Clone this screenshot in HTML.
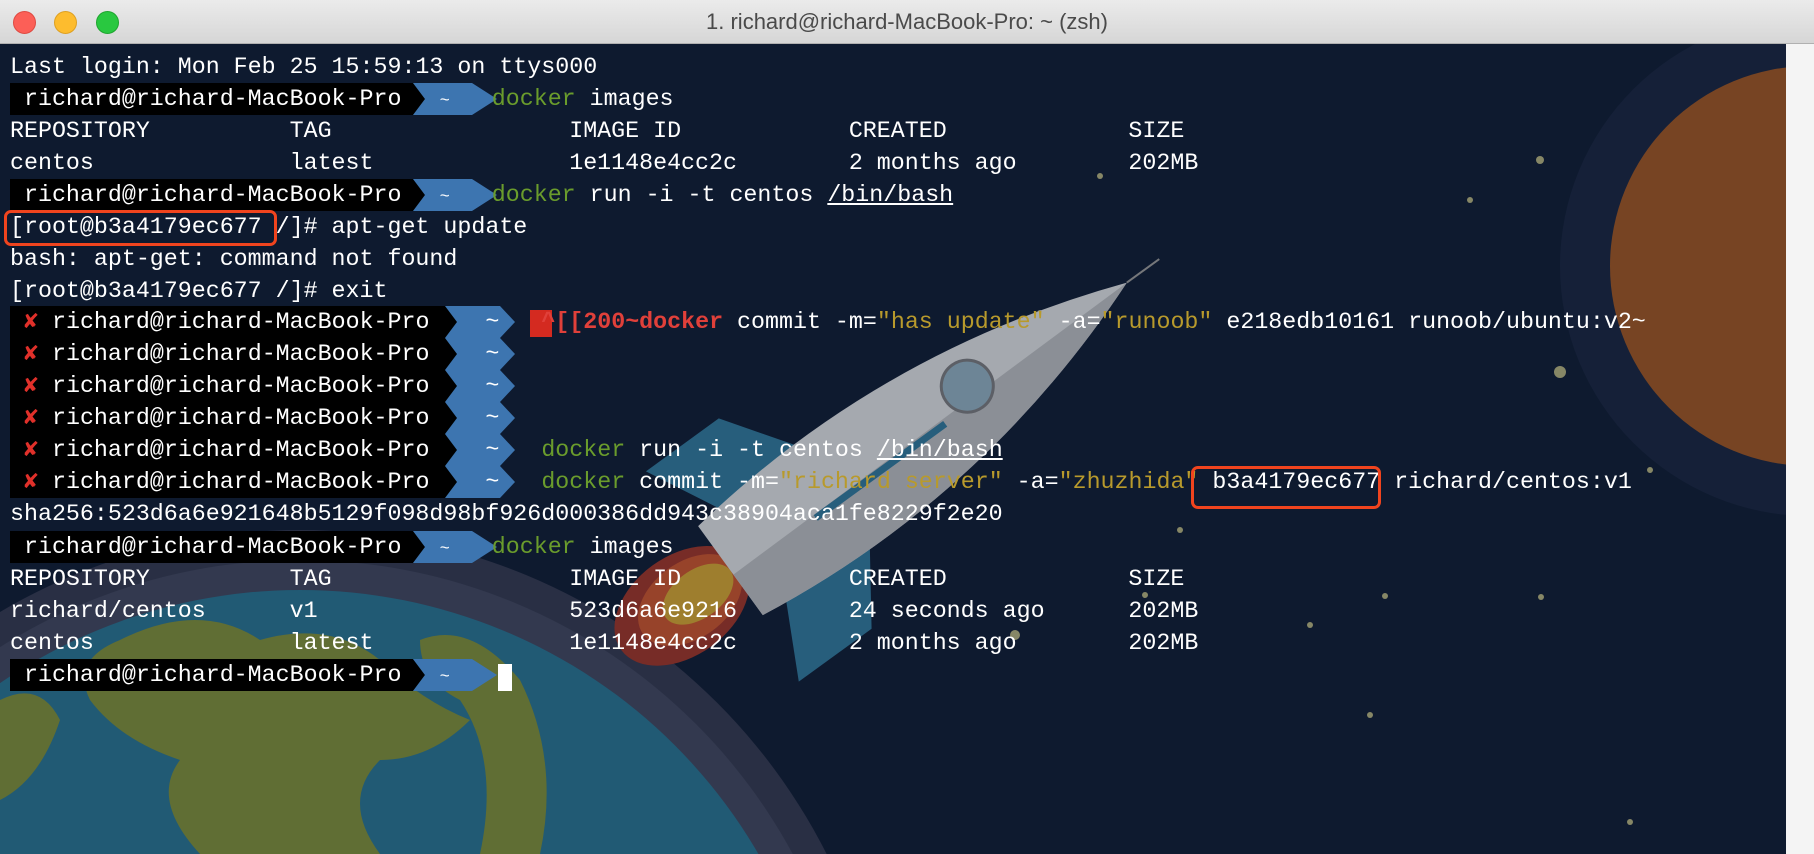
<!DOCTYPE html>
<html><head><meta charset="utf-8"><style>
html,body{margin:0;padding:0;width:1814px;height:854px;overflow:hidden;background:#0f1a30;}
#title{position:absolute;left:0;top:0;width:1814px;height:43px;background:linear-gradient(#ebebeb,#d6d6d6);border-bottom:1px solid #b0b0b0;font-family:"Liberation Sans",sans-serif;font-size:22px;color:#4a4a4a;text-align:center;line-height:43px;}
.tl{position:absolute;top:11px;width:21px;height:21px;border-radius:50%;}
#bg{position:absolute;left:0;top:44px;}
#sb{position:absolute;left:1786px;top:44px;width:28px;height:810px;background:#f4f4f4;}
.l{position:absolute;left:10px;height:32px;line-height:32px;font-family:"Liberation Mono",monospace;font-size:23.3px;color:#fff;white-space:pre;}
.g{color:#6a9c2c}.y{color:#b89a2c}.r{color:#e0403a;font-weight:bold}
.u{text-decoration:underline}
.box{position:absolute;border:3px solid #f0441e;border-radius:7px;}
</style></head><body>
<div id="title">1. richard@richard-MacBook-Pro: ~ (zsh)
<div class="tl" style="left:13px;background:#fc5f57;border:1px solid #de4a42"></div>
<div class="tl" style="left:54px;background:#fdbc2e;border:1px solid #dea022"></div>
<div class="tl" style="left:96px;background:#29c840;border:1px solid #1fa52f"></div>
</div>
<svg id="bg" width="1814" height="810" viewBox="0 44 1814 810">
<circle cx="1810" cy="266" r="250" fill="#17223a"/>
<circle cx="1810" cy="266" r="200" fill="#8a4c22"/>
<circle cx="300" cy="1120" r="590" fill="#2e3348"/>
<circle cx="300" cy="1120" r="560" fill="#3a3f55"/>
<circle cx="300" cy="1120" r="530" fill="#256580"/>
<path d="M120 640 Q200 600 260 640 Q330 620 380 660 Q420 700 470 720 Q430 760 380 760 Q340 800 380 854 L200 854 Q150 800 180 760 Q120 740 90 700 Q70 660 120 640Z" fill="#6f7d36"/>
<path d="M0 700 Q40 680 60 720 Q40 780 0 800Z" fill="#6f7d36"/>
<path d="M420 640 Q470 620 520 680 Q560 760 540 854 L480 854 Q500 760 460 700 Q420 680 420 640Z" fill="#6f7d36"/>
<g fill="#9c9a70">
<circle cx="1540" cy="160" r="4"/><circle cx="1470" cy="200" r="3"/><circle cx="1560" cy="372" r="6"/><circle cx="1541" cy="597" r="3"/><circle cx="1385" cy="596" r="3"/><circle cx="1100" cy="176" r="3"/><circle cx="1015" cy="635" r="5"/><circle cx="1145" cy="595" r="3"/><circle cx="1310" cy="625" r="3"/><circle cx="1630" cy="822" r="3"/><circle cx="1180" cy="530" r="3"/><circle cx="1650" cy="470" r="3"/><circle cx="1318" cy="872" r="3"/><circle cx="1040" cy="313" r="3"/><circle cx="1370" cy="715" r="3"/>
</g>
<g transform="translate(690,600) rotate(-36)">
<ellipse cx="-10" cy="0" rx="75" ry="50" fill="#8a2f26"/>
<ellipse cx="0" cy="0" rx="58" ry="38" fill="#b04a2a"/>
<ellipse cx="10" cy="0" rx="40" ry="24" fill="#b8902e"/>
<path d="M80 -52 L180 -58 L130 -130 L40 -130Z" fill="#2c6a8a"/>
<path d="M80 52 L180 58 L130 130 L40 130Z" fill="#2c6a8a"/>
<path d="M50 -55 Q300 -90 540 0 Q300 90 50 55 Z" fill="#c0c2c6"/>
<path d="M50 5 L540 0 Q300 90 50 55Z" fill="#a2a4a8"/>
<circle cx="350" cy="-10" r="26" fill="#7e98a8" stroke="#6a6c70" stroke-width="3"/>
<rect x="150" y="4" width="160" height="7" fill="#2c6a8a"/>
<line x1="540" y1="0" x2="580" y2="0" stroke="#888" stroke-width="2"/>
</g>
<rect x="0" y="44" width="1814" height="810" fill="#0f1a30" opacity="0.15"/>
<g fill="#000">
<path d="M10 83 H413 L425 99 L413 115 H10Z"/>
<path d="M10 179 H413 L425 195 L413 211 H10Z"/>
<path d="M10 531 H413 L425 547 L413 563 H10Z"/>
<path d="M10 659 H413 L425 675 L413 691 H10Z"/>
<path d="M10 306 H457 V498 H10Z"/>
</g>
<g fill="#3d75b0">
<path d="M413 83 H472 L497 99 L472 115 H413 L425 99Z"/>
<path d="M413 179 H472 L497 195 L472 211 H413 L425 195Z"/>
<path d="M413 531 H472 L497 547 L472 563 H413 L425 547Z"/>
<path d="M413 659 H472 L497 675 L472 691 H413 L425 675Z"/>
<path d="M445 306 H500 L515 322 L500 338 L515 354 L500 370 L515 386 L500 402 L515 418 L500 434 L515 450 L500 466 L515 482 L500 498 H445 L457 482 L445 466 L457 450 L445 434 L457 418 L445 402 L457 386 L445 370 L457 354 L445 338 L457 322Z"/>
</g>
<rect x="530" y="310" width="22" height="27" fill="#d42a20"/>
<rect x="498" y="664" width="14" height="27" fill="#fff"/>
</svg>
<div id="sb"></div>
<div class="l" style="top:51px">Last login: Mon Feb 25 15:59:13 on ttys000</div>
<div class="l" style="top:83px"> richard@richard-MacBook-Pro  <span style="font-size:17px"> ~</span>   <span class="g">docker</span> images</div>
<div class="l" style="top:115px">REPOSITORY          TAG                 IMAGE ID            CREATED             SIZE</div>
<div class="l" style="top:147px">centos              latest              1e1148e4cc2c        2 months ago        202MB</div>
<div class="l" style="top:179px"> richard@richard-MacBook-Pro  <span style="font-size:17px"> ~</span>   <span class="g">docker</span> run -i -t centos <span class="u">/bin/bash</span></div>
<div class="l" style="top:211px">[root@b3a4179ec677 /]# apt-get update</div>
<div class="l" style="top:243px">bash: apt-get: command not found</div>
<div class="l" style="top:275px">[root@b3a4179ec677 /]# exit</div>
<div class="l" style="top:306px"><span style="color:#e0302a"> ✘</span> richard@richard-MacBook-Pro    ~   <span class="r">^[[200~docker</span> commit -m=<span class="y">"has update"</span> -a=<span class="y">"runoob"</span> e218edb10161 runoob/ubuntu:v2~</div>
<div class="l" style="top:338px"><span style="color:#e0302a"> ✘</span> richard@richard-MacBook-Pro    ~</div>
<div class="l" style="top:370px"><span style="color:#e0302a"> ✘</span> richard@richard-MacBook-Pro    ~</div>
<div class="l" style="top:402px"><span style="color:#e0302a"> ✘</span> richard@richard-MacBook-Pro    ~</div>
<div class="l" style="top:434px"><span style="color:#e0302a"> ✘</span> richard@richard-MacBook-Pro    ~   <span class="g">docker</span> run -i -t centos <span class="u">/bin/bash</span></div>
<div class="l" style="top:466px"><span style="color:#e0302a"> ✘</span> richard@richard-MacBook-Pro    ~   <span class="g">docker</span> commit -m=<span class="y">"richard server"</span> -a=<span class="y">"zhuzhida"</span> b3a4179ec677 richard/centos:v1</div>
<div class="l" style="top:498px">sha256:523d6a6e921648b5129f098d98bf926d000386dd943c38904aca1fe8229f2e20</div>
<div class="l" style="top:531px"> richard@richard-MacBook-Pro  <span style="font-size:17px"> ~</span>   <span class="g">docker</span> images</div>
<div class="l" style="top:563px">REPOSITORY          TAG                 IMAGE ID            CREATED             SIZE</div>
<div class="l" style="top:595px">richard/centos      v1                  523d6a6e9216        24 seconds ago      202MB</div>
<div class="l" style="top:627px">centos              latest              1e1148e4cc2c        2 months ago        202MB</div>
<div class="l" style="top:659px"> richard@richard-MacBook-Pro  <span style="font-size:17px"> ~</span></div>
<div class="box" style="left:4px;top:210px;width:267px;height:30px"></div>
<div class="box" style="left:1191px;top:466px;width:184px;height:37px"></div>
</body></html>
